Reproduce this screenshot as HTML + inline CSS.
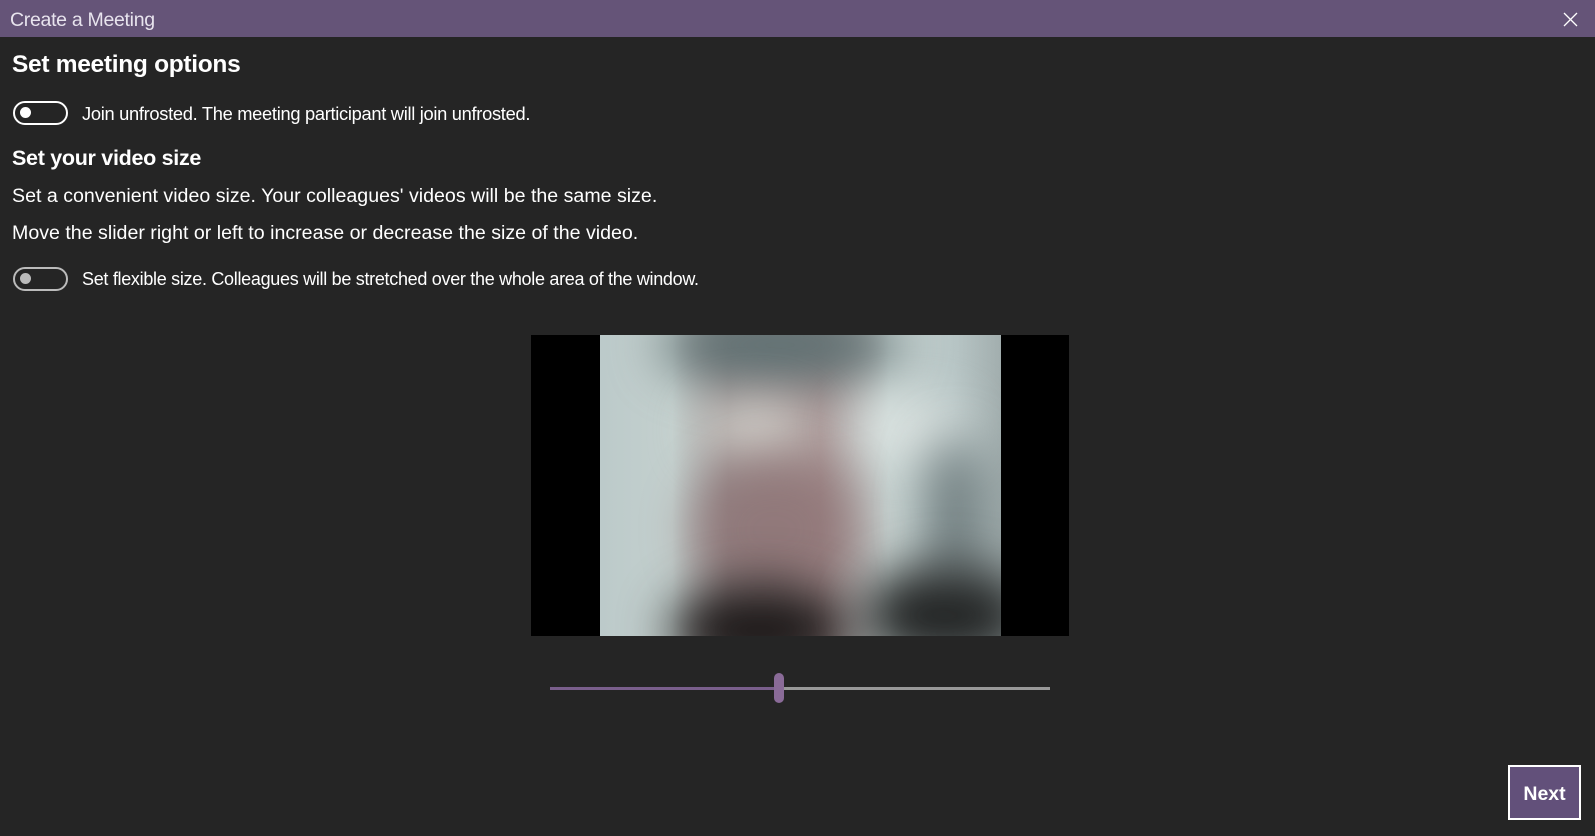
<!DOCTYPE html>
<html><head><meta charset="utf-8"><style>
*{margin:0;padding:0;box-sizing:border-box}
body{width:1595px;height:836px;background:#252525;font-family:"Liberation Sans",sans-serif;color:#fff;position:relative;overflow:hidden}
.bar{position:absolute;left:0;top:0;width:1595px;height:37px;background:#655478}
.bar .t{position:absolute;left:10px;top:9px;font-size:19.5px;color:#e8e4ee;letter-spacing:-0.3px}
.x{position:absolute;left:1563px;top:12px}
.abs{position:absolute;white-space:nowrap}
h1{position:absolute;left:12px;top:51px;font-size:24.5px;font-weight:bold;letter-spacing:-0.3px}
h2{position:absolute;left:12px;top:146px;font-size:21.5px;font-weight:bold;letter-spacing:-0.3px}
.p{font-size:19.6px;left:12px;letter-spacing:0px}
.s{font-size:18.3px;left:82px;letter-spacing:-0.3px}
.tg{position:absolute;left:13px;width:55px;height:24px;border:2.5px solid #fff;border-radius:12px}
.tg:after{content:"";position:absolute;left:5px;top:4px;width:11px;height:11px;border-radius:50%;background:#fff}
.tg.g{border-color:#bbb}.tg.g:after{background:#bbb}
.vid{position:absolute;left:531px;top:335px;width:538px;height:301px;background:#000}
.img{position:absolute;left:69px;top:0;width:401px;height:301px;overflow:hidden;
background:linear-gradient(90deg,#bccaca 0%,#c4d0ce 18%,#9e9494 32%,#a89494 55%,#c8d4d2 72%,#b8c6c6 88%,#a2aeae 100%)}
.b{position:absolute;border-radius:50%;filter:blur(25px)}
.tr{position:absolute;top:687px;height:3px}
.th{position:absolute;left:774px;top:673px;width:10px;height:30px;border-radius:5px;background:#8a6b98}
.next{position:absolute;left:1508px;top:765px;width:73px;height:55px;background:#62507a;border:2.5px solid #fff;font-size:19.5px;font-weight:bold;text-align:center;line-height:54px}
</style></head><body>
<div class="bar"><div class="t">Create a Meeting</div>
<svg class="x" width="15" height="15" viewBox="0 0 15 15"><path d="M1 1L14 14M14 1L1 14" stroke="#fff" stroke-width="1.3"/></svg></div>
<h1>Set meeting options</h1>
<div class="tg" style="top:101px"></div>
<div class="abs s" style="top:103px">Join unfrosted. The meeting participant will join unfrosted.</div>
<h2>Set your video size</h2>
<div class="abs p" style="top:185px">Set a convenient video size. Your colleagues' videos will be the same size.</div>
<div class="abs p" style="top:222px">Move the slider right or left to increase or decrease the size of the video.</div>
<div class="tg g" style="top:267px"></div>
<div class="abs s" style="top:269px;font-size:18px">Set flexible size. Colleagues will be stretched over the whole area of the window.</div>
<div class="vid"><div class="img">
<div class="b" style="left:60px;top:-30px;width:240px;height:80px;background:#5f7072"></div>
<div class="b" style="left:100px;top:70px;width:110px;height:50px;background:#d8d8d2"></div>
<div class="b" style="left:250px;top:70px;width:120px;height:50px;background:#dfe6e4"></div>
<div class="b" style="left:90px;top:120px;width:170px;height:150px;background:#8a6e70;opacity:.7"></div>
<div class="b" style="left:330px;top:100px;width:50px;height:160px;background:#657274"></div>
<div class="b" style="left:70px;top:250px;width:180px;height:90px;background:#1c1818"></div>
<div class="b" style="left:260px;top:230px;width:170px;height:100px;background:#232525"></div>
</div></div>
<div class="tr" style="left:550px;width:228px;background:#7a5f8c"></div>
<div class="tr" style="left:778px;width:272px;background:#999"></div>
<div class="th"></div>
<div class="next">Next</div>
</body></html>
